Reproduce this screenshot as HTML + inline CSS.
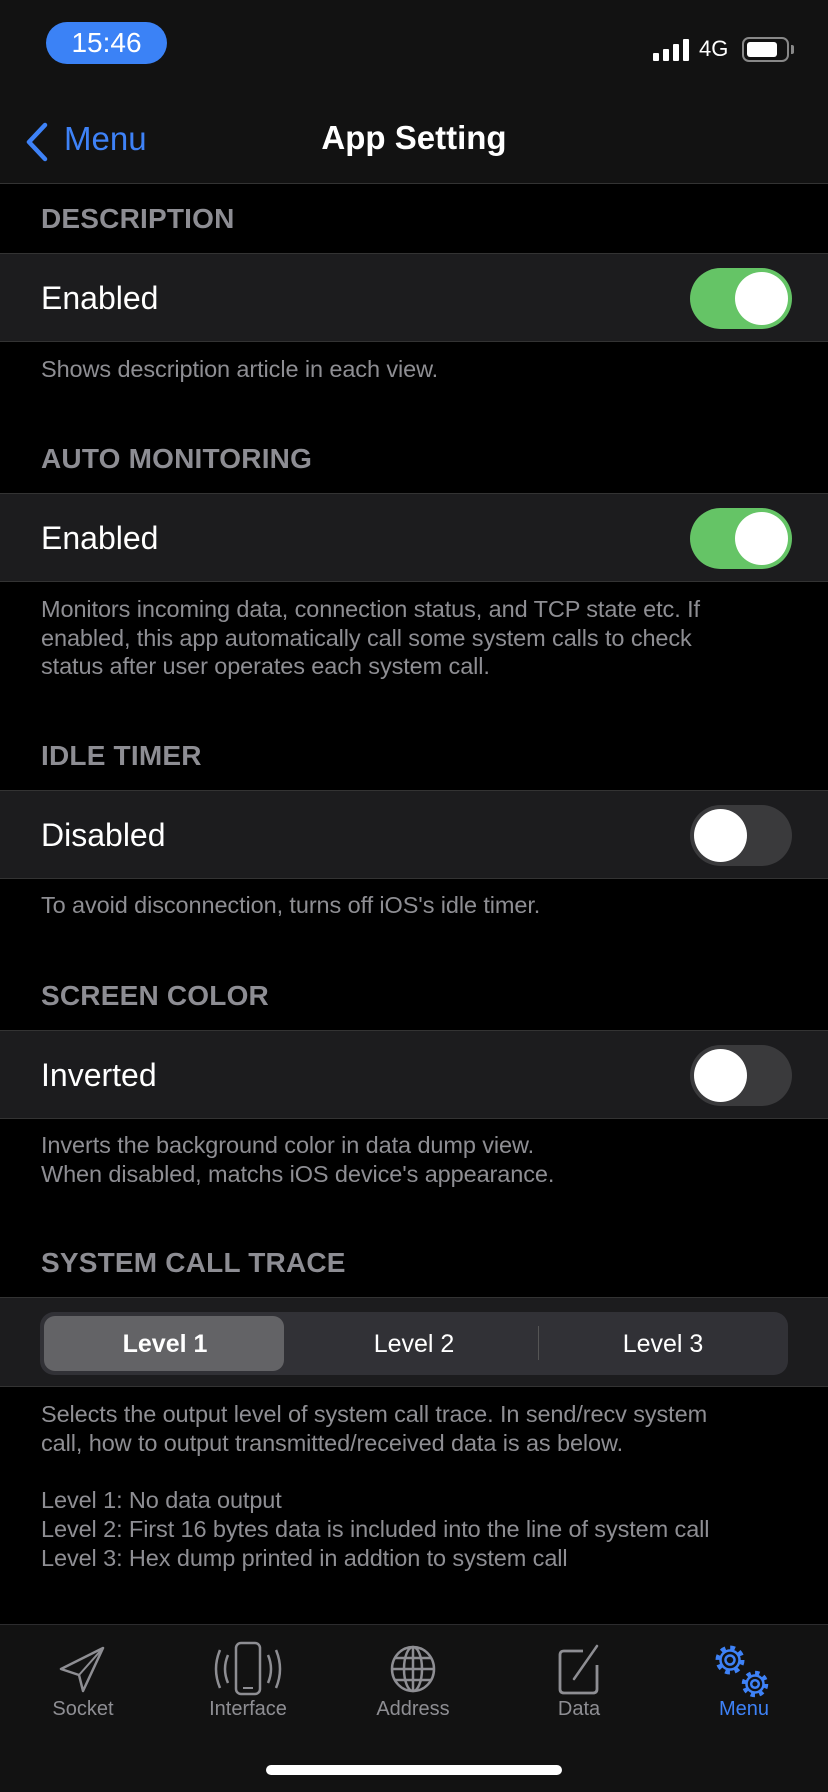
<!DOCTYPE html>
<html><head><meta charset="utf-8">
<style>
*{margin:0;padding:0;box-sizing:border-box}
body{width:828px;height:1792px;background:#000;font-family:"Liberation Sans",sans-serif;color:#fff;position:relative;overflow:hidden}
.abs{position:absolute}
.nav{left:0;top:0;width:828px;height:184px;background:#121212;border-bottom:1px solid #333}
.hdr{left:41px;font-size:28px;color:#8d8d93;font-weight:bold;letter-spacing:0.2px}
.row{left:0;width:828px;height:89px;background:#1c1c1e;border-top:1px solid #333;border-bottom:1px solid #333}
.row .t{position:absolute;left:41px;top:26px;font-size:32px}
.ft{left:41px;font-size:23.5px;color:#8e8e93;line-height:28.7px;letter-spacing:-0.1px}
.tg{position:absolute;left:690px;top:14px;width:102px;height:61px;border-radius:31px;background:#3a3a3c}
.tg.on{background:#65c466}
.tg::after{content:"";position:absolute;top:4px;left:4px;width:53px;height:53px;border-radius:50%;background:#fff}
.tg.on::after{left:45px}
.tab{top:1624px;left:0;width:828px;height:168px;background:#121212;border-top:1px solid #2c2c2e}
.ti{position:absolute;top:73px;font-size:20px;color:#8e8e93;text-align:center;width:140px}
</style></head><body>
<div class="abs nav"></div>
<div class="abs" style="left:46px;top:22px;width:121px;height:42px;border-radius:21px;background:#3b82f6;color:#fff;font-size:28px;text-align:center;line-height:42px">15:46</div>
<div class="abs" style="left:652px;top:39px">
<svg width="40" height="22"><rect x="1" y="14" width="6" height="8" rx="1" fill="#fff"/><rect x="11" y="10" width="6" height="12" rx="1" fill="#fff"/><rect x="21" y="5" width="6" height="17" rx="1" fill="#fff"/><rect x="31" y="0" width="6" height="22" rx="1" fill="#fff"/></svg></div>
<div class="abs" style="left:699px;top:36px;font-size:22px">4G</div>
<div class="abs" style="left:742px;top:37px;width:47px;height:25px;border:2px solid #888;border-radius:7px"><div style="margin:3px;width:30px;height:15px;background:#fff;border-radius:3px"></div></div>
<div class="abs" style="left:791px;top:45px;width:3px;height:9px;background:#888;border-radius:0 2px 2px 0"></div>
<svg class="abs" style="left:24px;top:122px" width="26" height="40"><path d="M21 3 L5 20 L21 37" fill="none" stroke="#3e82f7" stroke-width="4.5" stroke-linecap="round" stroke-linejoin="round"/></svg>
<div class="abs" style="left:64px;top:120px;font-size:33px;color:#3e82f7">Menu</div>
<div class="abs" style="left:0;width:828px;text-align:center;top:119px;font-size:33px;font-weight:bold">App Setting</div>

<div class="abs hdr" style="top:203px">DESCRIPTION</div>
<div class="abs row" style="top:253px"><div class="t">Enabled</div><div class="tg on"></div></div>
<div class="abs ft" style="top:355px">Shows description article in each view.</div>

<div class="abs hdr" style="top:443px">AUTO MONITORING</div>
<div class="abs row" style="top:493px"><div class="t">Enabled</div><div class="tg on"></div></div>
<div class="abs ft" style="top:595px">Monitors incoming data, connection status, and TCP state etc. If<br>enabled, this app automatically call some system calls to check<br>status after user operates each system call.</div>

<div class="abs hdr" style="top:740px">IDLE TIMER</div>
<div class="abs row" style="top:790px"><div class="t">Disabled</div><div class="tg"></div></div>
<div class="abs ft" style="top:891px">To avoid disconnection, turns off iOS's idle timer.</div>

<div class="abs hdr" style="top:980px">SCREEN COLOR</div>
<div class="abs row" style="top:1030px"><div class="t">Inverted</div><div class="tg"></div></div>
<div class="abs ft" style="top:1131px">Inverts the background color in data dump view.<br>When disabled, matchs iOS device's appearance.</div>

<div class="abs hdr" style="top:1247px">SYSTEM CALL TRACE</div>
<div class="abs row" style="top:1297px;height:90px">
<div style="position:absolute;left:40px;top:14px;width:748px;height:63px;border-radius:14px;background:#313136">
<div style="position:absolute;left:4px;top:4px;width:240px;height:55px;border-radius:11px;background:#636366"></div>
<div style="position:absolute;left:498px;top:14px;width:1px;height:34px;background:#555"></div>
<div style="position:absolute;left:0;top:18px;width:250px;text-align:center;font-size:25px;font-weight:bold">Level 1</div>
<div style="position:absolute;left:249px;top:18px;width:250px;text-align:center;font-size:25px">Level 2</div>
<div style="position:absolute;left:498px;top:18px;width:250px;text-align:center;font-size:25px">Level 3</div>
</div></div>
<div class="abs ft" style="top:1400px">Selects the output level of system call trace. In send/recv system<br>call, how to output transmitted/received data is as below.<br><br>Level 1: No data output<br>Level 2: First 16 bytes data is included into the line of system call<br>Level 3: Hex dump printed in addtion to system call</div>

<div class="abs tab">
<svg class="abs" style="left:58px;top:19px" width="50" height="50"><path d="M45 4 L3 25 L21 31 L25 47 Z" fill="none" stroke="#8e8e93" stroke-width="2.5" stroke-linejoin="round"/><path d="M21 31 L45 4" stroke="#8e8e93" stroke-width="2"/></svg>
<div class="ti" style="left:13px">Socket</div>
<svg class="abs" style="left:212px;top:16px" width="72" height="56"><rect x="24" y="2" width="24" height="51" rx="5" fill="none" stroke="#8e8e93" stroke-width="2.5"/><line x1="31" y1="47" x2="41" y2="47" stroke="#8e8e93" stroke-width="2"/><path d="M16 14 Q10 28 16 42 M8 9 Q0 28 8 47 M56 14 Q62 28 56 42 M64 9 Q72 28 64 47" fill="none" stroke="#8e8e93" stroke-width="2.5"/></svg>
<div class="ti" style="left:178px">Interface</div>
<svg class="abs" style="left:390px;top:20px" width="46" height="48"><ellipse cx="23" cy="24" rx="21" ry="22" fill="none" stroke="#8e8e93" stroke-width="2.5"/><ellipse cx="23" cy="24" rx="9" ry="22" fill="none" stroke="#8e8e93" stroke-width="2.5"/><path d="M23 2 V46 M2 24 H44 M5 13 H41 M5 35 H41" stroke="#8e8e93" stroke-width="2.5"/></svg>
<div class="ti" style="left:343px">Address</div>
<svg class="abs" style="left:557px;top:18px" width="44" height="52"><path d="M26 8 H7 Q3 8 3 12 V46 Q3 50 7 50 H36 Q40 50 40 46 V22" fill="none" stroke="#8e8e93" stroke-width="2.8" stroke-linejoin="round"/><path d="M17 36 L40 3" stroke="#8e8e93" stroke-width="2.5" stroke-linecap="round"/></svg>
<div class="ti" style="left:509px">Data</div>
<svg class="abs" style="left:713px;top:16px" width="62" height="62"><g fill="none" stroke="#3e82f7"><circle cx="17" cy="19" r="12" stroke-dasharray="4.7 4.7" stroke-width="5"/><circle cx="17" cy="19" r="9.5" stroke-width="2.5"/><circle cx="17" cy="19" r="4.5" stroke-width="2.5"/><circle cx="42" cy="43" r="11" stroke-dasharray="4.3 4.3" stroke-width="4.5"/><circle cx="42" cy="43" r="8.5" stroke-width="2.5"/><circle cx="42" cy="43" r="3.8" stroke-width="2.5"/></g></svg>
<div class="ti" style="left:674px;color:#3e82f7">Menu</div>
<div class="abs" style="left:266px;top:140px;width:296px;height:10px;border-radius:5px;background:#fff"></div>
</div>
</body></html>
